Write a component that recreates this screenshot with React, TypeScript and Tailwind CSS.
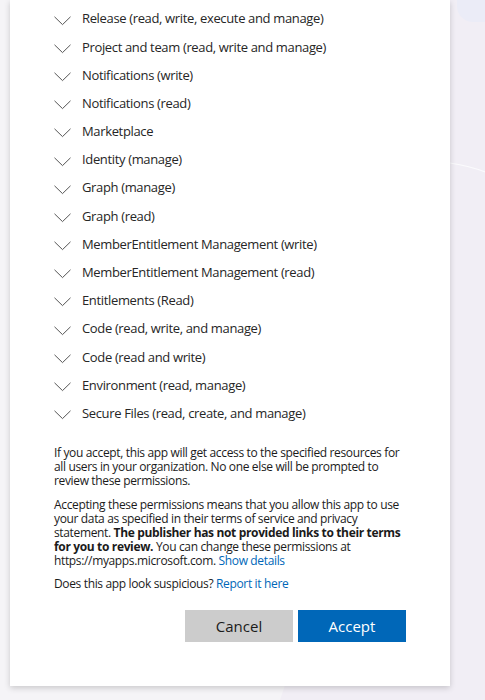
import React from "react";

// 权限列表
const PERMISSIONS: string[] = [
  "Release (read, write, execute and manage)",
  "Project and team (read, write and manage)",
  "Notifications (write)",
  "Notifications (read)",
  "Marketplace",
  "Identity (manage)",
  "Graph (manage)",
  "Graph (read)",
  "MemberEntitlement Management (write)",
  "MemberEntitlement Management (read)",
  "Entitlements (Read)",
  "Code (read, write, and manage)",
  "Code (read and write)",
  "Environment (read, manage)",
  "Secure Files (read, create, and manage)",
];

function Chevron() {
  return (
    <svg width="17" height="10" viewBox="0 0 17 10" className="shrink-0 mt-[3px]">
      <polyline points="0.5,0.8 8.5,8.6 16.5,0.8" fill="none" stroke="#555555" strokeWidth="1" />
    </svg>
  );
}

function Backdrop() {
  return (
    <svg className="absolute inset-0 w-full h-full pointer-events-none" viewBox="0 0 485 700" preserveAspectRatio="none">
      <rect x="0" y="0" width="485" height="700" fill="#f1eef5" />
      <polygon points="0,0 300,0 300,640 280,700 0,700" fill="#f5f4f7" />
      <rect x="457" y="-30" width="60" height="52" rx="16" fill="#ebecf7" />
      <path d="M450 163 Q470 166 485 172" stroke="#fbfbfd" strokeWidth="1.2" fill="none" />
    </svg>
  );
}

export default function App() {
  return (
    <div className="relative w-[485px] h-[700px] overflow-hidden font-['Open_Sans',sans-serif] text-[#1b1b1b]">
      <Backdrop />
      <div className="relative ml-[10px] w-[440px] h-[686px] bg-white shadow-[0_2px_6px_rgba(0,0,0,0.18)] px-[44px] pt-[5px]">
        <ul>
          {PERMISSIONS.map((p) => (
            <li key={p} className="flex items-center gap-[11px] h-[28.2px]">
              <Chevron />
              <span className="text-[13px] tracking-[-0.35px] text-[#262626] whitespace-nowrap">{p}</span>
            </li>
          ))}
        </ul>

        <div className="mt-[18px] text-[12px] leading-[14px] tracking-[-0.35px]">
          <p>
            If you accept, this app will get access to the specified resources for all users in your
            organization. No one else will be prompted to review these permissions.
          </p>
          <p className="mt-[10px]">
            Accepting these permissions means that you allow this app to use your data as specified in
            their terms of service and privacy statement.{" "}
            <b className="font-bold">The publisher has not provided links to their terms for you to review.</b>{" "}
            You can change these permissions at https://myapps.microsoft.com.{" "}
            <a className="text-[#0067b8]">Show details</a>
          </p>
          <p className="mt-[9px]">
            Does this app look suspicious? <a className="text-[#0067b8]">Report it here</a>
          </p>
        </div>

        <div className="mt-[19px] flex justify-end gap-[5px]">
          <button className="w-[108px] h-[32px] bg-[#cccccc] text-[15px] text-[#1b1b1b]">Cancel</button>
          <button className="w-[108px] h-[32px] bg-[#0067b8] text-[15px] text-white">Accept</button>
        </div>
      </div>
    </div>
  );
}
